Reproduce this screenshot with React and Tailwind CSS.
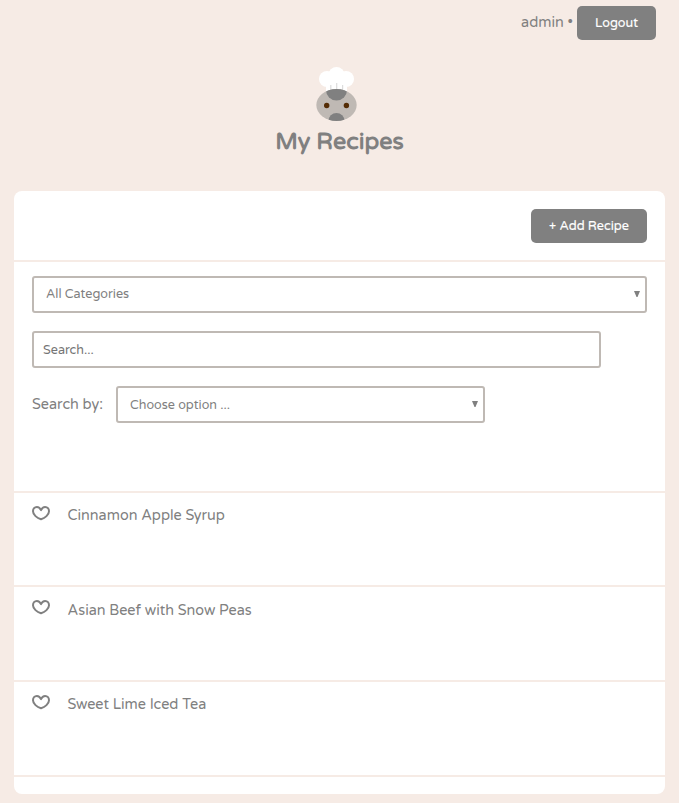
const recipes = [
  { name: "Cinnamon Apple Syrup", style: "h-[94px]", label: "mt-[13px]" },
  { name: "Asian Beef with Snow Peas", style: "h-[95px]", label: "mt-[14px]" },
  { name: "Sweet Lime Iced Tea", style: "h-[95px]", label: "mt-[13px]" },
];

function Logo() {
  return (
    <svg width="42" height="56" viewBox="0 0 42 56" className="block">
      <defs>
        <clipPath id="face">
          <ellipse cx="20.5" cy="38" rx="20.2" ry="16" />
        </clipPath>
      </defs>
      <g fill="#fff">
        <circle cx="11" cy="12" r="8" />
        <circle cx="20.5" cy="8" r="8" />
        <circle cx="30" cy="12" r="8" />
        <path d="M10 12h21v16H10z" />
      </g>
      <path d="M14.8 18v8M20.7 16v10M26.6 18v8" stroke="#ddd" strokeWidth="1.2" />
      <ellipse cx="20.5" cy="38" rx="20.2" ry="16" fill="#bfb9b4" />
      <g clipPath="url(#face)" fill="#808080">
        <circle cx="20.5" cy="23" r="10.5" />
        <circle cx="20.5" cy="54" r="8" />
      </g>
      <circle cx="10.7" cy="38.5" r="2.7" fill="#542c05" />
      <circle cx="30.4" cy="38.5" r="2.7" fill="#542c05" />
    </svg>
  );
}

function Heart() {
  return (
    <svg width="18" height="15" viewBox="0 0 18 15" className="mt-[13px] block shrink-0" fill="none" stroke="#808080" strokeWidth="2" strokeLinejoin="round">
      <path d="M9 4.200C8 1.800 6.400 1 4.900 1 2.500 1 1 2.900 1 5.200 1 8.800 5 12 9 13.300c4-1.300 8-4.500 8-8.100C17 2.900 15.500 1 13.100 1 11.600 1 10 1.800 9 4.200z" />
    </svg>
  );
}

function Arrow() {
  return (
    <svg width="6" height="6" viewBox="0 0 6 6" className="mb-px block" fill="#808080">
      <path d="M0 0h6L3.500 6h-1z" />
    </svg>
  );
}

export default function App() {
  return (
    <div className="h-[803px] w-[679px] overflow-hidden bg-[#f6ebe5] font-['Varela_Round','Noto_Sans',sans-serif] text-[14.4px] text-[#808080]">
      <header className="flex h-[67px] items-start justify-end pr-[23px] pt-[6px]">
        <span className="mr-[4px] whitespace-nowrap leading-[34px]">admin •</span>
        <button className="h-[34px] w-[79px] rounded-[5px] bg-[#808080] pt-px text-[12.6px] text-white [-webkit-text-stroke:0.15px_white]">Logout</button>
      </header>
      <div className="flex h-[124px] flex-col items-center">
        <div className="-ml-[6px]"><Logo /></div>
        <h1 className="mt-[3px] whitespace-nowrap text-[23.4px] font-bold leading-[32px]">My Recipes</h1>
      </div>
      <main className="mx-[14px] h-[603px] overflow-hidden rounded-[8px] bg-white">
        <div className="flex h-[71px] justify-end border-b-2 border-[#f6ebe5] pr-[18px] pt-[18px]">
          <button className="h-[34px] w-[116px] whitespace-nowrap rounded-[5px] bg-[#808080] pt-px text-[12.6px] text-white [-webkit-text-stroke:0.15px_white]">+ Add Recipe</button>
        </div>
        <div className="flex h-[231px] flex-col gap-[18px] border-b-2 border-[#f6ebe5] px-[18px] pt-[14px] text-[12.6px]">
          <div className="flex h-[37px] shrink-0 items-center justify-between rounded-[3px] border-2 border-[#bfb9b4] pl-[12px] pr-[5px]">
            <span>All Categories</span>
            <Arrow />
          </div>
          <div className="flex h-[37px] w-[569px] shrink-0 items-center rounded-[3px] border-2 border-[#bfb9b4] pl-[9px] pt-px text-[#757575]">Search...</div>
          <div className="flex h-[37px] shrink-0 items-center">
            <span className="w-[84px] whitespace-nowrap text-[14.4px]">Search by:</span>
            <div className="flex h-[37px] w-[369px] items-center justify-between rounded-[3px] border-2 border-[#bfb9b4] pl-[12px] pr-[5px]">
              <span className="pt-[2px]">Choose option ...</span>
              <Arrow />
            </div>
          </div>
        </div>
        {recipes.map((r) => (
          <div key={r.name} className={"flex items-start gap-[17.5px] border-b-2 border-[#f6ebe5] px-[18px] " + r.style}>
            <Heart />
            <span className={"whitespace-nowrap leading-[20px] " + r.label}>{r.name}</span>
          </div>
        ))}
      </main>
    </div>
  );
}
